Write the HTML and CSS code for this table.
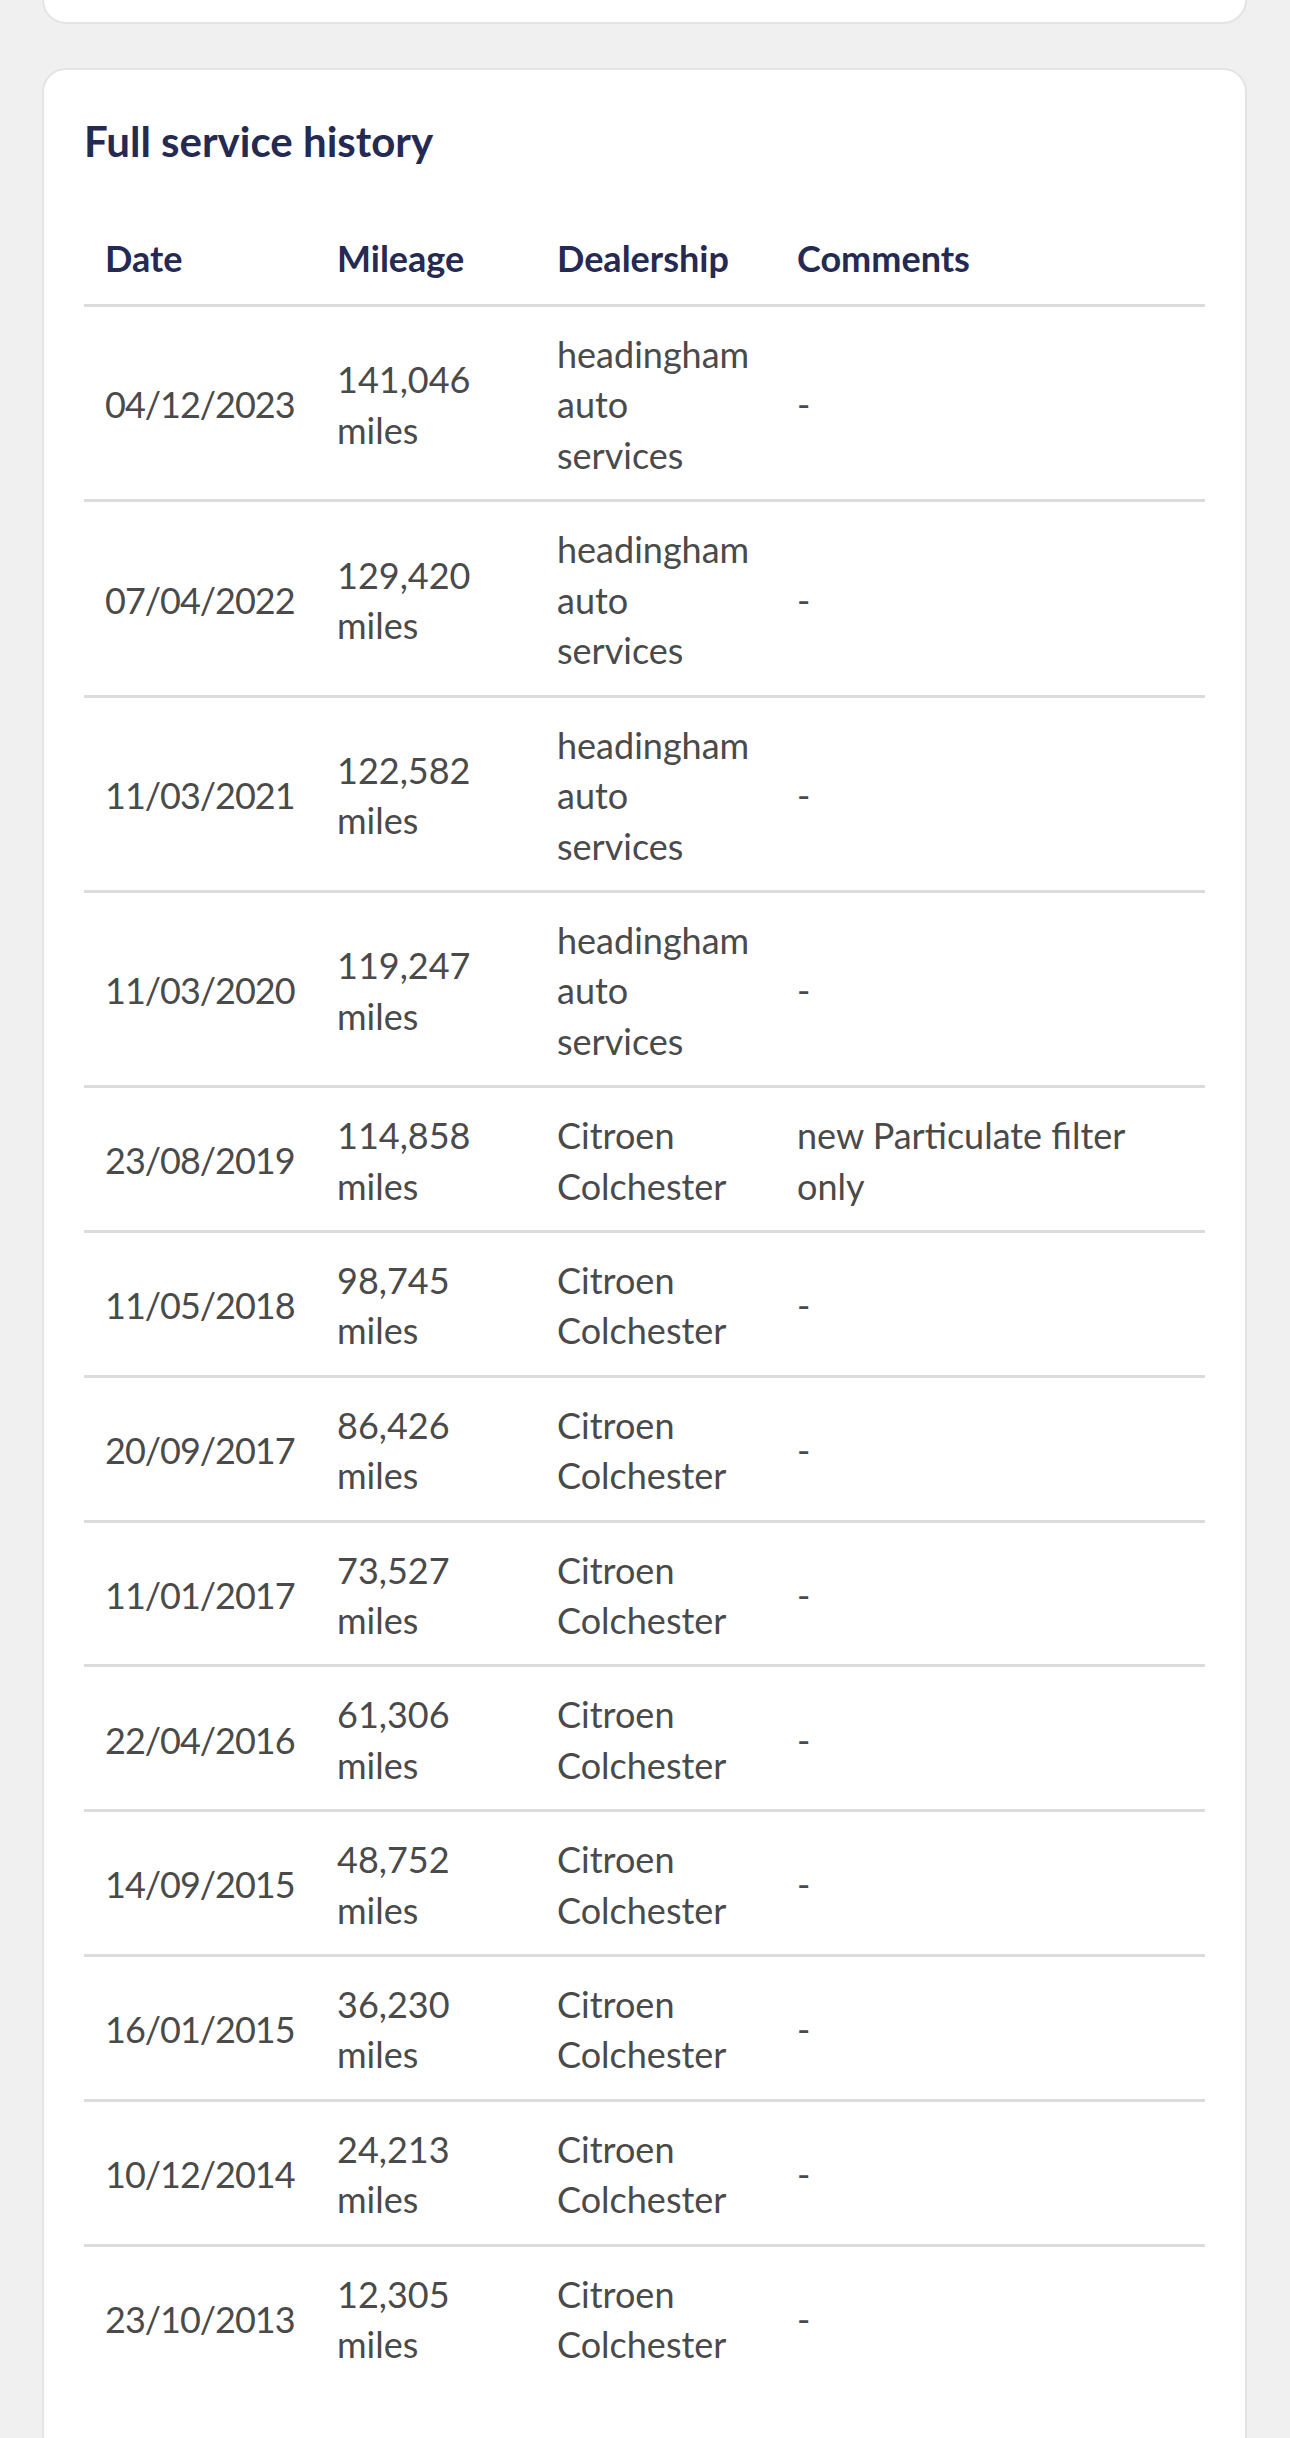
FILE: index.html
```html
<!DOCTYPE html>
<html lang="en">
<head>
<meta charset="utf-8">
<title>Full service history</title>
<link rel="stylesheet" href="styles.css">
</head>
<body>
<div class="page">
  <div class="card card-top"></div>
  <section class="card history">
    <h2 class="title">Full service history</h2>
    <table class="table">
      <colgroup>
        <col class="c-date">
        <col class="c-mileage">
        <col class="c-dealer">
        <col class="c-comments">
      </colgroup>
      <thead>
        <tr><th>Date</th><th>Mileage</th><th>Dealership</th><th>Comments</th></tr>
      </thead>
      <tbody>
        <tr><td class="date">04/12/2023</td><td>141,046 miles</td><td>headingham auto services</td><td>-</td></tr>
        <tr><td class="date">07/04/2022</td><td>129,420 miles</td><td>headingham auto services</td><td>-</td></tr>
        <tr><td class="date">11/03/2021</td><td>122,582 miles</td><td>headingham auto services</td><td>-</td></tr>
        <tr><td class="date">11/03/2020</td><td>119,247 miles</td><td>headingham auto services</td><td>-</td></tr>
        <tr><td class="date">23/08/2019</td><td>114,858 miles</td><td>Citroen Colchester</td><td>new Particulate filter only</td></tr>
        <tr><td class="date">11/05/2018</td><td>98,745 miles</td><td>Citroen Colchester</td><td>-</td></tr>
        <tr><td class="date">20/09/2017</td><td>86,426 miles</td><td>Citroen Colchester</td><td>-</td></tr>
        <tr><td class="date">11/01/2017</td><td>73,527 miles</td><td>Citroen Colchester</td><td>-</td></tr>
        <tr><td class="date">22/04/2016</td><td>61,306 miles</td><td>Citroen Colchester</td><td>-</td></tr>
        <tr><td class="date">14/09/2015</td><td>48,752 miles</td><td>Citroen Colchester</td><td>-</td></tr>
        <tr><td class="date">16/01/2015</td><td>36,230 miles</td><td>Citroen Colchester</td><td>-</td></tr>
        <tr><td class="date">10/12/2014</td><td>24,213 miles</td><td>Citroen Colchester</td><td>-</td></tr>
        <tr><td class="date">23/10/2013</td><td>12,305 miles</td><td>Citroen Colchester</td><td>-</td></tr>
      </tbody>
    </table>
  </section>
</div>
</body>
</html>
```

FILE: styles.css
```css
html, body {
  margin: 0;
  padding: 0;
  background: #f0f0f0;
}

body {
  font-family: Lato, "Open Sans", "Liberation Sans", sans-serif;
  color: #4a4a4a;
}

.page {
  padding: 0 43px 0 42px;
}

.card {
  background: #ffffff;
  border: 2px solid #e4e4e4;
  box-sizing: border-box;
}

.card-top {
  height: 24px;
  border-top: none;
  border-radius: 0 0 24px 24px;
}

.history {
  margin-top: 44px;
  border-radius: 24px;
  padding: 47px 40px 80px;
}

.title {
  margin: 0 0 47px;
  font-size: 42px;
  line-height: 48px;
  font-weight: 700;
  color: #252a52;
}

.table {
  width: 100%;
  border-collapse: collapse;
  table-layout: fixed;
}

.c-date { width: 232px; }
.c-mileage { width: 220px; }
.c-dealer { width: 240px; }
.c-comments { width: auto; }

.table th,
.table td {
  text-align: left;
  vertical-align: middle;
  font-size: 36px;
  line-height: 50.5px;
  border-bottom: 3px solid #dcdcdc;
}

.table th {
  padding: 20.8px 21px 20.7px;
  font-weight: 700;
  color: #252a52;
}

.table td {
  padding: 22px 21px 18.8px;
  font-weight: 400;
  color: #4a4a4a;
}

.table td.date {
  letter-spacing: -1px;
}

.table td:last-child {
  padding-right: 40px;
}

.table tbody tr:last-child td {
  border-bottom: none;
}
```
